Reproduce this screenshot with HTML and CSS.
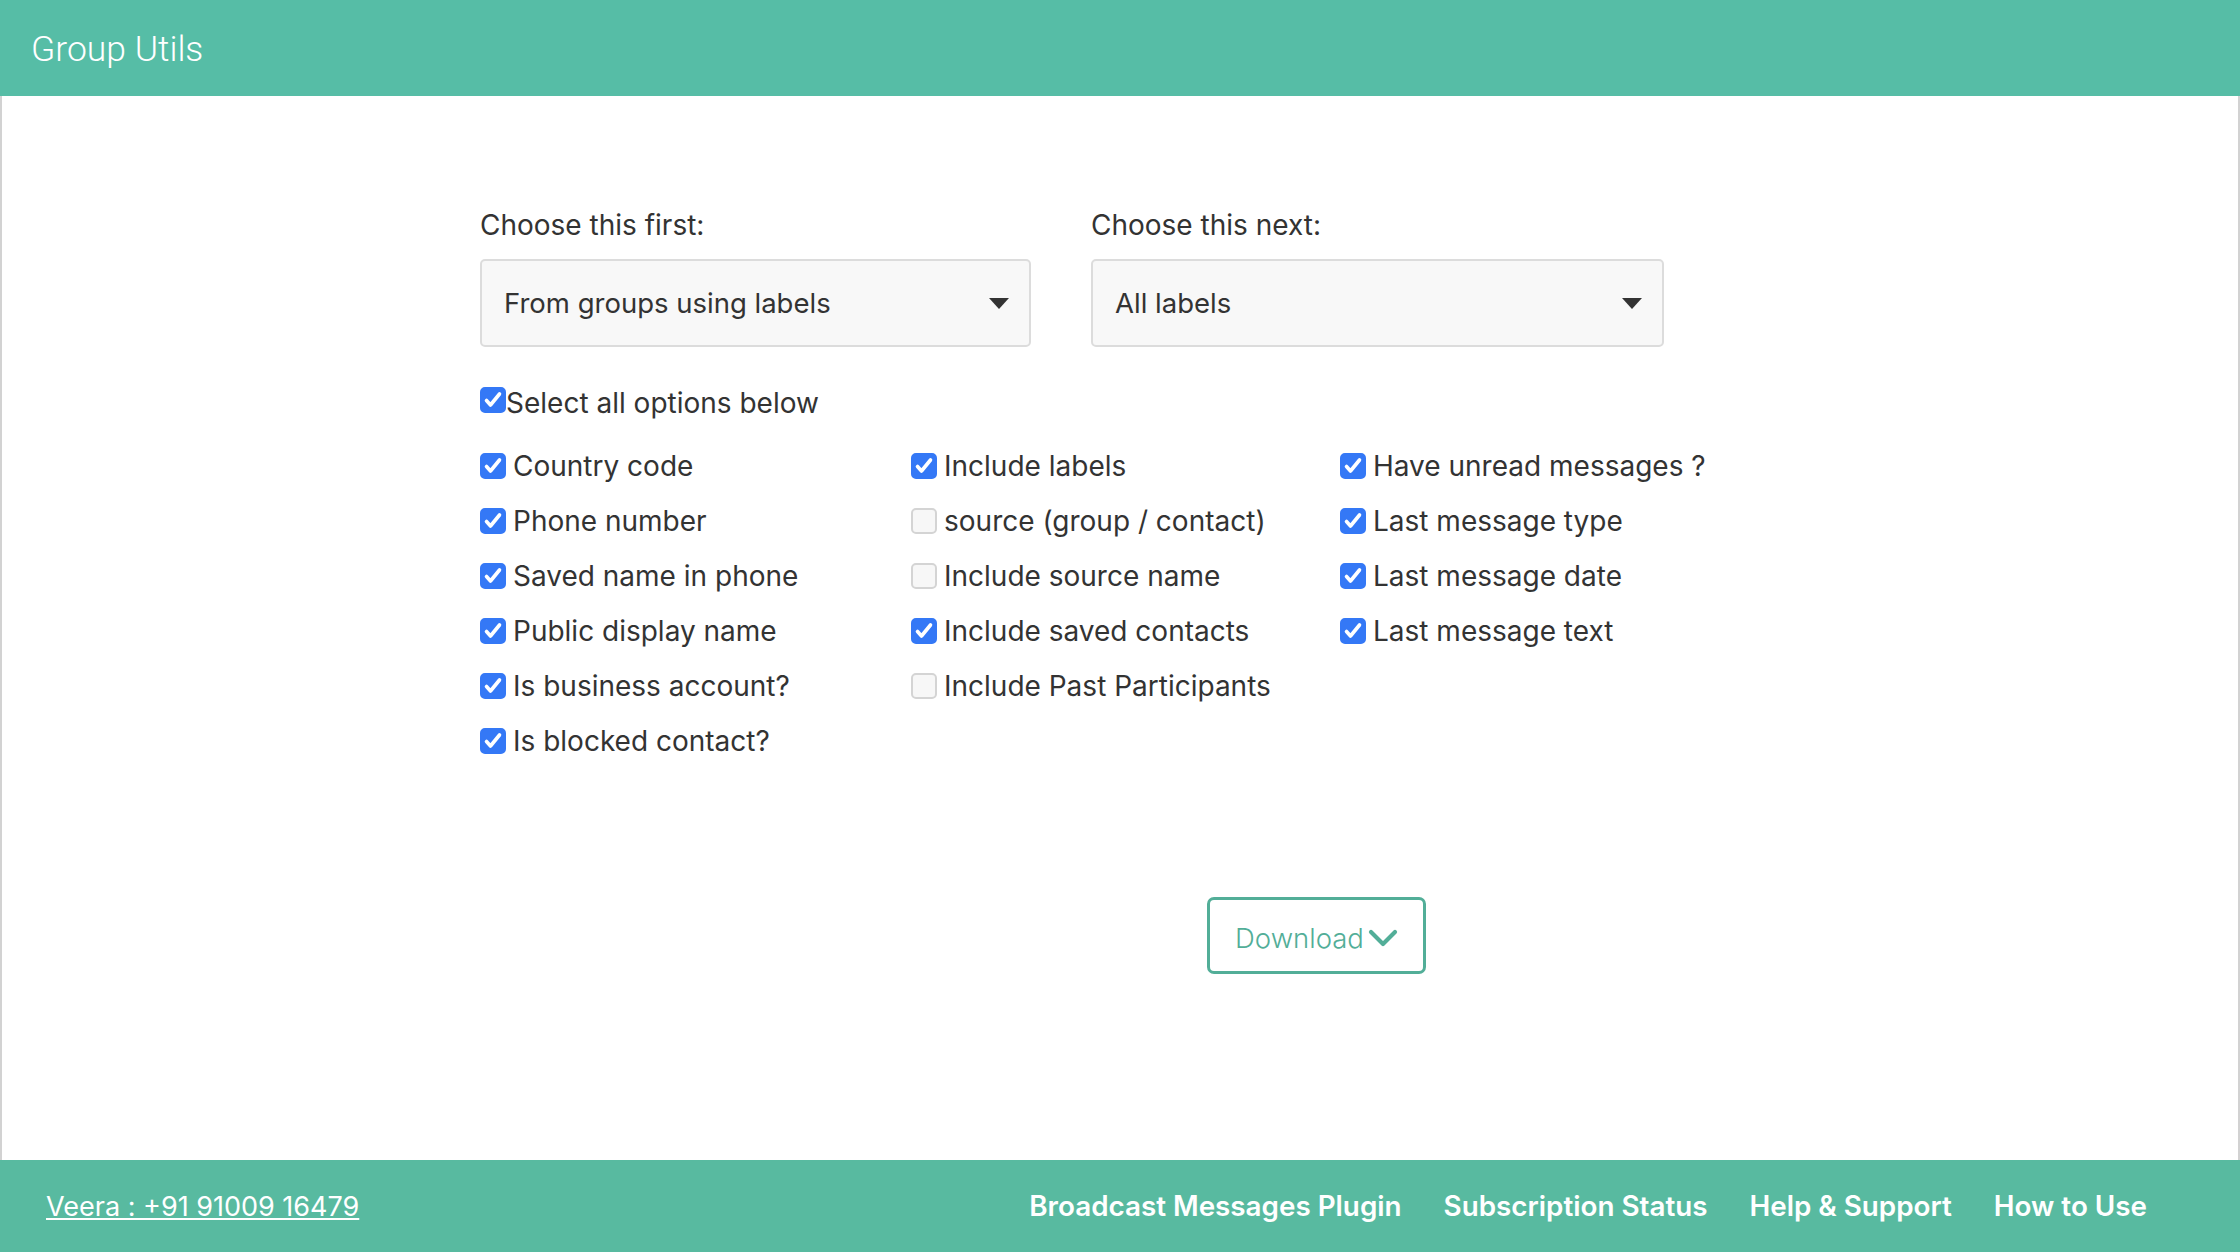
FILE: index.html
```html
<!DOCTYPE html>
<html>
<head>
    <meta charset="utf-8">
    <title>Group Utils</title>
    <link rel="stylesheet" href="styles.css">
</head>
<body>
<header class="topbar">
    <div class="title">Group Utils</div>
</header>

<main class="content">
    <div class="container">
        <div class="choosers">
            <div class="chooser first">
                <label for="source">Choose this first:</label>
                <div class="select-wrap">
                    <select id="source">
                        <option>From groups using labels</option>
                    </select>
                    <svg class="arrow" width="20" height="11" viewBox="0 0 20 11"><path d="M0 0h20L10 11z" fill="#333"/></svg>
                </div>
            </div>
            <div class="chooser second">
                <label for="labels">Choose this next:</label>
                <div class="select-wrap">
                    <select id="labels">
                        <option>All labels</option>
                    </select>
                    <svg class="arrow" width="20" height="11" viewBox="0 0 20 11"><path d="M0 0h20L10 11z" fill="#333"/></svg>
                </div>
            </div>
        </div>

        <label class="opt select-all">
            <input type="checkbox" checked>
            <span class="box"><svg width="26" height="26" viewBox="0 0 26 26"><path d="M6.5 13.5l4 4.5 9-11" fill="none" stroke="#fff" stroke-width="3.6" stroke-linecap="round" stroke-linejoin="round"/></svg></span>
            Select all options below
        </label>

        <div class="options">
            <div class="col">
                <label class="opt"><input type="checkbox" checked><span class="box"><svg width="26" height="26" viewBox="0 0 26 26"><path d="M6.5 13.5l4 4.5 9-11" fill="none" stroke="#fff" stroke-width="3.6" stroke-linecap="round" stroke-linejoin="round"/></svg></span>Country code</label>
                <label class="opt"><input type="checkbox" checked><span class="box"><svg width="26" height="26" viewBox="0 0 26 26"><path d="M6.5 13.5l4 4.5 9-11" fill="none" stroke="#fff" stroke-width="3.6" stroke-linecap="round" stroke-linejoin="round"/></svg></span>Phone number</label>
                <label class="opt"><input type="checkbox" checked><span class="box"><svg width="26" height="26" viewBox="0 0 26 26"><path d="M6.5 13.5l4 4.5 9-11" fill="none" stroke="#fff" stroke-width="3.6" stroke-linecap="round" stroke-linejoin="round"/></svg></span>Saved name in phone</label>
                <label class="opt"><input type="checkbox" checked><span class="box"><svg width="26" height="26" viewBox="0 0 26 26"><path d="M6.5 13.5l4 4.5 9-11" fill="none" stroke="#fff" stroke-width="3.6" stroke-linecap="round" stroke-linejoin="round"/></svg></span>Public display name</label>
                <label class="opt"><input type="checkbox" checked><span class="box"><svg width="26" height="26" viewBox="0 0 26 26"><path d="M6.5 13.5l4 4.5 9-11" fill="none" stroke="#fff" stroke-width="3.6" stroke-linecap="round" stroke-linejoin="round"/></svg></span>Is business account?</label>
                <label class="opt"><input type="checkbox" checked><span class="box"><svg width="26" height="26" viewBox="0 0 26 26"><path d="M6.5 13.5l4 4.5 9-11" fill="none" stroke="#fff" stroke-width="3.6" stroke-linecap="round" stroke-linejoin="round"/></svg></span>Is blocked contact?</label>
            </div>
            <div class="col">
                <label class="opt"><input type="checkbox" checked><span class="box"><svg width="26" height="26" viewBox="0 0 26 26"><path d="M6.5 13.5l4 4.5 9-11" fill="none" stroke="#fff" stroke-width="3.6" stroke-linecap="round" stroke-linejoin="round"/></svg></span>Include labels</label>
                <label class="opt"><input type="checkbox"><span class="box"></span>source (group / contact)</label>
                <label class="opt"><input type="checkbox"><span class="box"></span>Include source name</label>
                <label class="opt"><input type="checkbox" checked><span class="box"><svg width="26" height="26" viewBox="0 0 26 26"><path d="M6.5 13.5l4 4.5 9-11" fill="none" stroke="#fff" stroke-width="3.6" stroke-linecap="round" stroke-linejoin="round"/></svg></span>Include saved contacts</label>
                <label class="opt"><input type="checkbox"><span class="box"></span>Include Past Participants</label>
            </div>
            <div class="col">
                <label class="opt"><input type="checkbox" checked><span class="box"><svg width="26" height="26" viewBox="0 0 26 26"><path d="M6.5 13.5l4 4.5 9-11" fill="none" stroke="#fff" stroke-width="3.6" stroke-linecap="round" stroke-linejoin="round"/></svg></span>Have unread messages ?</label>
                <label class="opt"><input type="checkbox" checked><span class="box"><svg width="26" height="26" viewBox="0 0 26 26"><path d="M6.5 13.5l4 4.5 9-11" fill="none" stroke="#fff" stroke-width="3.6" stroke-linecap="round" stroke-linejoin="round"/></svg></span>Last message type</label>
                <label class="opt"><input type="checkbox" checked><span class="box"><svg width="26" height="26" viewBox="0 0 26 26"><path d="M6.5 13.5l4 4.5 9-11" fill="none" stroke="#fff" stroke-width="3.6" stroke-linecap="round" stroke-linejoin="round"/></svg></span>Last message date</label>
                <label class="opt"><input type="checkbox" checked><span class="box"><svg width="26" height="26" viewBox="0 0 26 26"><path d="M6.5 13.5l4 4.5 9-11" fill="none" stroke="#fff" stroke-width="3.6" stroke-linecap="round" stroke-linejoin="round"/></svg></span>Last message text</label>
            </div>
        </div>

        <div class="actions">
            <button class="download" type="button">
                Download
                <svg width="30" height="18" viewBox="0 0 30 18"><path d="M3 3l12 12L27 3" fill="none" stroke="#52ae98" stroke-width="4.2" stroke-linecap="round" stroke-linejoin="round"/></svg>
            </button>
        </div>
    </div>
</main>

<footer class="bottombar">
    <a class="contact" href="#">Veera : +91 91009 16479</a>
    <nav class="links">
        <a href="#">Broadcast Messages Plugin</a>
        <a href="#">Subscription Status</a>
        <a href="#">Help &amp; Support</a>
        <a href="#">How to Use</a>
    </nav>
</footer>
</body>
</html>
```

FILE: styles.css
```css
* {
    box-sizing: border-box;
}

body {
    margin: 0;
    height: 1252px;
    display: flex;
    flex-direction: column;
    font-family: Inter, "Noto Sans", sans-serif;
    color: #333;
    background: #fff;
}

.topbar {
    height: 96px;
    flex: none;
    background-color: #56bda6;
    display: flex;
    align-items: center;
    padding-left: 31px;
    padding-top: 2px;
}

.title {
    font-family: Roboto, sans-serif;
    font-weight: 300;
    font-size: 35.5px;
    color: #fff;
}

.content {
    flex: 1;
    border-left: 2px solid #d2d2d2;
    border-right: 2px solid #d2d2d2;
}

.container {
    width: 1280px;
    margin-left: 478px;
    padding-top: 112px;
}

.choosers {
    display: grid;
    grid-template-columns: 551px 573px;
    column-gap: 60px;
}

.chooser label {
    display: block;
    font-size: 28px;
    line-height: 34px;
    margin-bottom: 17px;
}

.select-wrap {
    position: relative;
}

select {
    appearance: none;
    -webkit-appearance: none;
    width: 100%;
    height: 88px;
    border: 2px solid #dcdcdc;
    border-radius: 5px;
    background-color: #f8f8f8;
    padding: 0 22px;
    font-family: Inter, "Noto Sans", sans-serif;
    font-size: 27.5px;
    color: #333;
}

.select-wrap .arrow {
    position: absolute;
    right: 22px;
    top: 39px;
    pointer-events: none;
}

.opt {
    display: flex;
    align-items: center;
    font-size: 28px;
    line-height: 36px;
    height: 36px;
    white-space: nowrap;
}

.opt input {
    display: none;
}

.box {
    width: 26px;
    height: 26px;
    flex: none;
    margin-right: 7px;
    border-radius: 5px;
    border: 2px solid #d4d4d4;
    background: #f7f7f7;
    display: flex;
}

.box svg {
    margin: -2px;
}

.opt input:checked + .box {
    background: #3478f6;
    border-color: #3478f6;
}

.select-all {
    margin-top: 38px;
}

.select-all .box {
    margin-right: 0;
    margin-top: -6px;
}

.options {
    display: grid;
    grid-template-columns: 431px 429px 430px;
    margin-top: 27px;
}

.col {
    display: flex;
    flex-direction: column;
    gap: 19px;
}

.actions {
    padding-left: 727px;
    margin-top: 138px;
}

.download {
    width: 219px;
    height: 77px;
    border: 3px solid #52ae98;
    border-radius: 7px;
    background: #fff;
    color: #52ae98;
    font-family: Inter, "Noto Sans", sans-serif;
    font-weight: 300;
    font-size: 27.5px;
    display: flex;
    align-items: center;
    justify-content: center;
    gap: 4px;
    padding: 4px 0 0;
}

.bottombar {
    height: 92px;
    flex: none;
    background-color: #58baa0;
    display: flex;
    align-items: center;
    justify-content: space-between;
    padding: 0 93px 0 46px;
}

.bottombar a {
    color: #fff;
    font-size: 27px;
}

.contact {
    text-decoration: underline;
}

.links {
    display: flex;
    gap: 42px;
}

.links a {
    text-decoration: none;
    font-weight: 600;
    font-size: 27.8px;
}
```
